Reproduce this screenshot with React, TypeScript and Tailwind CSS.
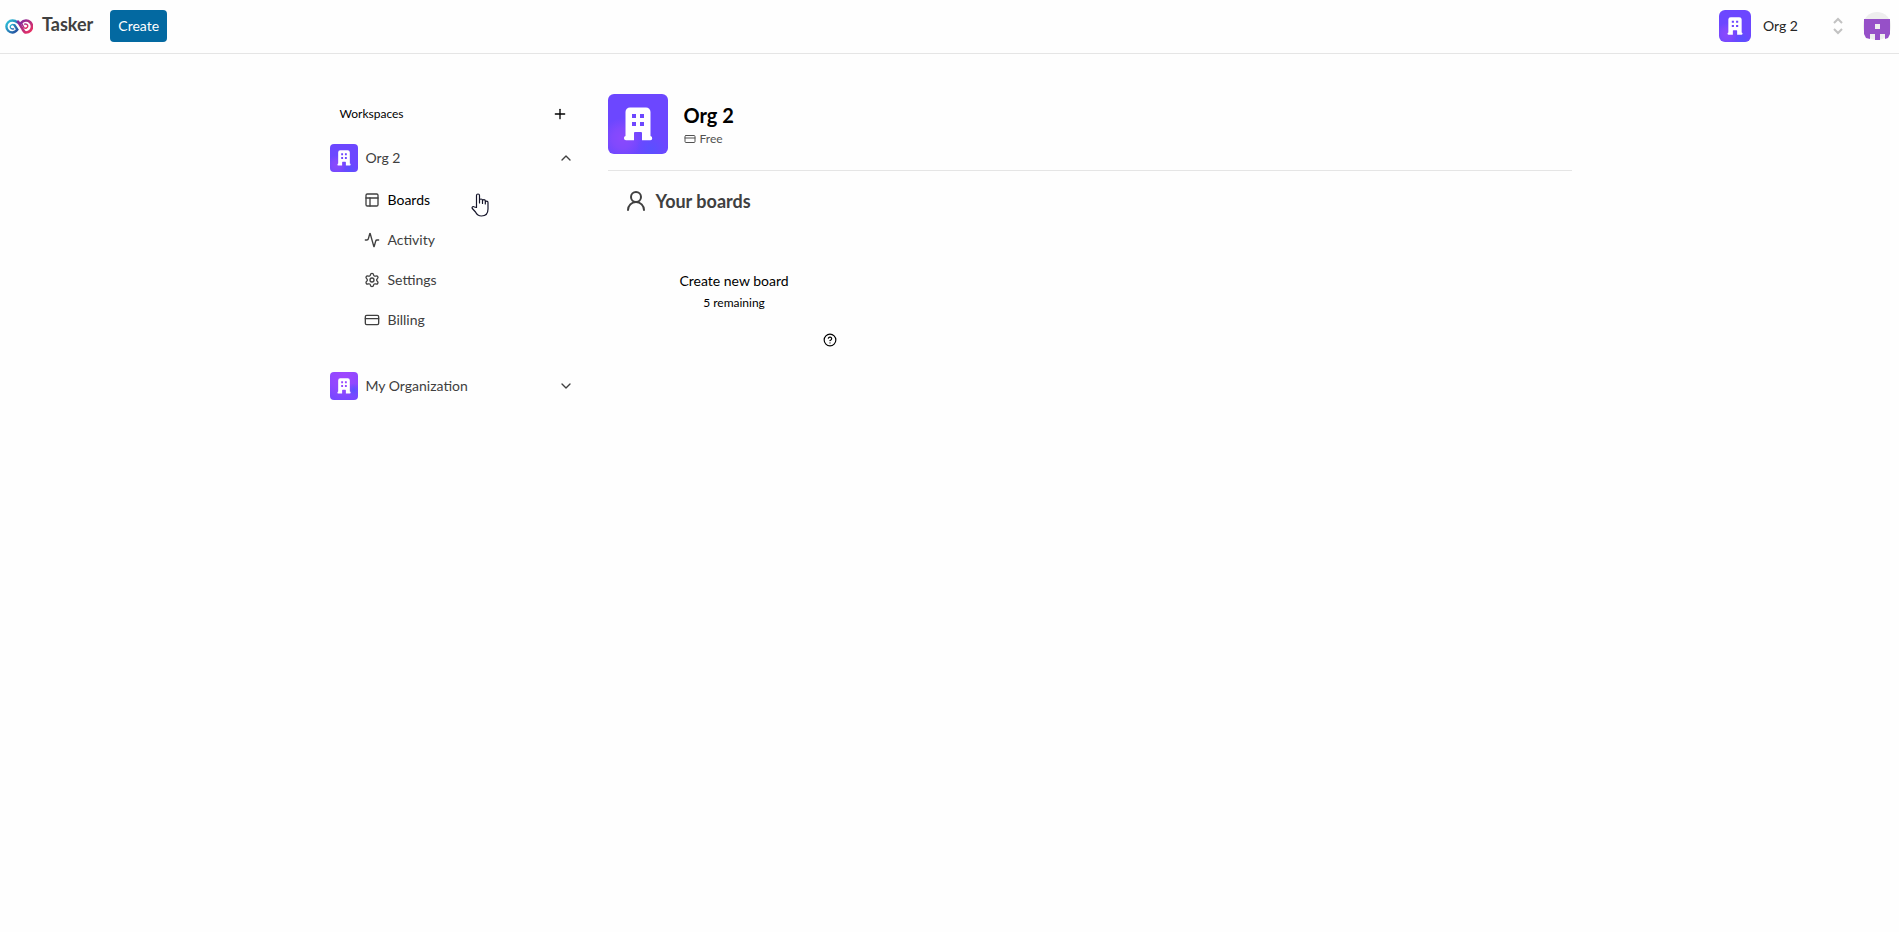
import { useId } from "react";
import type { ReactNode } from "react";
import {
  Activity,
  ChevronDown,
  ChevronUp,
  CreditCard,
  HelpCircle,
  Layout,
  Plus,
  Settings,
  UserRound,
} from "lucide-react";

function OrgLogo({ className, variant = "blue" }: { className: string; variant?: "blue" | "purple" }) {
  const id = useId();
  const purple = variant === "purple";
  return (
    <svg viewBox="0 0 60 60" className={className} aria-hidden="true">
      <defs>
        <radialGradient id={id + "a"} cx={purple ? "0.5" : "0.24"} cy={purple ? "0.1" : "0.74"} r={purple ? "1.1" : "0.34"}>
          <stop offset="0" stopColor={purple ? "#9f47ff" : "#8b49fd"} />
          <stop offset="0.5" stopColor={purple ? "#8f48ff" : "#8149fd"} />
          <stop offset="1" stopColor="#6c47ff" />
        </radialGradient>
        <radialGradient id={id + "b"} cx={purple ? "0.85" : "0.72"} cy={purple ? "0.65" : "0.92"} r="0.25">
          <stop offset="0" stopColor="#5a50ff" />
          <stop offset="1" stopColor="#5a50ff" stopOpacity="0" />
        </radialGradient>
      </defs>
      <rect width="60" height="60" fill={`url(#${id}a)`} />
      <rect width="60" height="60" fill={`url(#${id}b)`} />
      <path
        fill="#fff"
        fillRule="evenodd"
        d="M22 13.500h16a4.500 4.500 0 0 1 4.500 4.500v24a2.200 2.200 0 0 1 0 4.300H34V39a1 1 0 0 0-1-1h-6a1 1 0 0 0-1 1v7.300h-8a2.200 2.200 0 0 1-.5-4.300V18a4.500 4.500 0 0 1 4.500-4.500zM24 20v4h4v-4zm8 0v4h4v-4zm-8 8v4h4v-4zm8 0v4h4v-4z"
      />
    </svg>
  );
}

function TaskerMark() {
  return (
    <svg viewBox="0 0 28 15" className="h-[15px] w-7" fill="none" strokeLinecap="round" aria-hidden="true">
      <defs>
        <linearGradient id="markBlue" x1="0" y1="0" x2="1" y2="1">
          <stop offset="0" stopColor="#2cc6dc" />
          <stop offset="1" stopColor="#24499c" />
        </linearGradient>
        <linearGradient id="markRed" x1="0" y1="0" x2="1" y2="1">
          <stop offset="0" stopColor="#7c2aa0" />
          <stop offset="1" stopColor="#f0305e" />
        </linearGradient>
      </defs>
      <path stroke="url(#markBlue)" strokeWidth="2.400" d="M12.500 3.500C11 2 9.600 1.500 7.400 1.500a6 6 0 0 0 0 12c2.300 0 3.700-1.200 5-2.900L9.500 6.200" />
      <path stroke="url(#markBlue)" strokeWidth="1.400" d="M9.500 6.200C7.500 4.700 5 6 5.200 8c.2 1.700 2 2.200 3.400 1.900" />
      <path stroke="url(#markRed)" strokeWidth="2.600" d="M13 2.500l4.600 7.700c1.100 1.900 1.900 3.300 3.400 3.300a6 6 0 0 0 0-12c-2.200 0-3.600.8-4.700 2.300" />
      <path stroke="url(#markRed)" strokeWidth="1.400" d="M16.300 3.800l2.500 4.600c1.700 1.500 4 .6 4-1.300 0-1.700-1.700-2.400-3.200-2" />
    </svg>
  );
}

function Avatar() {
  return (
    <svg viewBox="0 0 28 28" className="size-7" aria-hidden="true">
      <circle cx="14" cy="14" r="14" fill="#eeeeee" />
      <path
        fill="#9650c8"
        fillRule="evenodd"
        d="M1 7h26v15l-2 4-3 1v-5h-5v6h-5v-6H7v5l-4-1-2-4zM12 12v5h5v-5z"
      />
    </svg>
  );
}

function HandCursor() {
  return (
    <svg viewBox="0 0 18 24" className="absolute top-[11px] left-[141px] h-6 w-[18px]" aria-hidden="true">
      <path
        d="M5.500 14.500V2.500a1.500 1.500 0 0 1 3 0V10 7.500a1.400 1.400 0 0 1 3 0V10.500 8a1.300 1.300 0 0 1 2.800 0v3-1.500a1.300 1.300 0 0 1 2.700 0V16c0 4-2 7-6.500 7-3.500 0-4.800-1.500-6-4L1.300 15.500c-.8-1.600 1-2.600 2.100-1.500z"
        fill="#fff"
        stroke="#15152a"
        strokeWidth="1.200"
        strokeLinejoin="round"
      />
    </svg>
  );
}

function NavItem({ icon, label, active, children }: { icon: ReactNode; label: string; active?: boolean; children?: ReactNode }) {
  return (
    <li className="relative">
      <a
        href="#"
        className={`flex h-9 items-center gap-2 pl-[34px] text-sm ${active ? "text-black" : "text-neutral-700"}`}
      >
        <span className="text-neutral-700">{icon}</span>
        {label}
      </a>
      {children}
    </li>
  );
}

function WorkspaceHeader({ name, variant, open }: { name: string; variant: "blue" | "purple"; open: boolean }) {
  return (
    <button type="button" aria-expanded={open} className="flex h-12 w-full items-center gap-2 text-left text-sm text-neutral-700">
      <OrgLogo className="size-7 rounded-sm" variant={variant} />
      <span className="flex-1">{name}</span>
      {open ? <ChevronUp className="size-4" /> : <ChevronDown className="size-4" />}
    </button>
  );
}

export default function App() {
  return (
    <div className="min-h-screen bg-[#fefefe] font-['Lato',sans-serif] text-black">
      <header className="flex h-[54px] items-center border-b border-neutral-200 px-[5px] pb-px">
        <a href="#" className="flex items-center gap-[9px]">
          <TaskerMark />
          <span className="pb-1 text-lg leading-6 font-bold text-neutral-700">Tasker</span>
        </a>
        <button type="button" className="ml-[17px] h-8 rounded-sm bg-[#0369a1] px-2 text-sm text-white">
          Create
        </button>
        <div className="ml-auto flex items-center">
          <button type="button" className="flex items-center text-sm text-neutral-800">
            <OrgLogo className="size-8 rounded-md" />
            <span className="ml-3 w-[67px] text-left">Org 2</span>
            <svg viewBox="0 0 16 20" className="h-5 w-4" fill="none" stroke="#c2c2c2" strokeWidth="2" aria-hidden="true">
              <path d="M4 7l4-4 4 4M4 13l4 4 4-4" />
            </svg>
          </button>
          <button type="button" aria-label="Account" className="ml-[17px] pr-[3px]">
            <Avatar />
          </button>
        </div>
      </header>

      <main className="mx-auto flex max-w-[1244px] gap-[34px] pt-10 pl-0.5">
        <aside className="w-[244px] shrink-0">
          <div className="flex h-10 items-center justify-between pl-[10px]">
            <span className="text-xs">Workspaces</span>
            <button type="button" aria-label="Add workspace" className="pr-[6px]">
              <Plus className="size-4" />
            </button>
          </div>
          <section>
            <WorkspaceHeader name="Org 2" variant="blue" open />
            <ul className="flex flex-col gap-1">
              <NavItem icon={<Layout className="size-4" />} label="Boards" active>
                <HandCursor />
              </NavItem>
              <NavItem icon={<Activity className="size-4" />} label="Activity" />
              <NavItem icon={<Settings className="size-4" />} label="Settings" />
              <NavItem icon={<CreditCard className="size-4" />} label="Billing" />
            </ul>
          </section>
          <section className="pt-6">
            <WorkspaceHeader name="My Organization" variant="purple" open={false} />
          </section>
        </aside>

        <div className="min-w-0 flex-1">
          <div className="flex items-center gap-4">
            <OrgLogo className="size-[60px] rounded-md" />
            <div className="flex flex-col gap-0.5">
              <h1 className="text-xl leading-7 font-bold">Org 2</h1>
              <p className="flex items-center gap-1 text-xs text-neutral-600">
                <CreditCard className="size-3" />
                Free
              </p>
            </div>
          </div>
          <hr className="mt-4 border-neutral-200" />
          <section className="px-4 pt-4">
            <h2 className="flex items-center gap-2 text-lg leading-7 font-bold text-neutral-700">
              <UserRound className="size-6" />
              Your boards
            </h2>
            <div className="mt-[14px] grid grid-cols-4 gap-4">
              <div className="relative">
                <button type="button" className="flex aspect-video w-full flex-col items-center justify-center gap-1">
                  <span className="text-sm">Create new board</span>
                  <span className="text-xs">5 remaining</span>
                </button>
                <HelpCircle className="absolute right-2 bottom-[6px] size-[14px]" />
              </div>
            </div>
          </section>
        </div>
      </main>
    </div>
  );
}
